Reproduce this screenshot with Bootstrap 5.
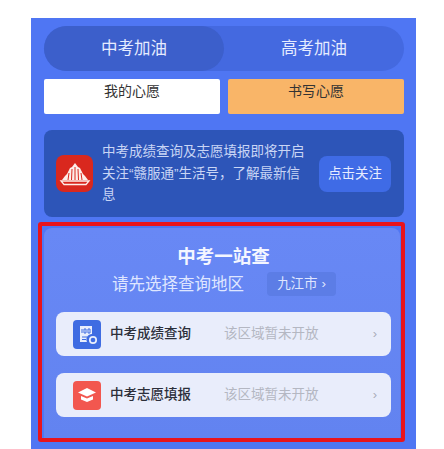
<!DOCTYPE html>
<html lang="zh-CN">
<head>
  <meta charset="UTF-8" />
  <meta name="viewport" content="width=device-width, initial-scale=1.0"/>
  <title>中考加油</title>
  <link href="https://cdn.jsdelivr.net/npm/bootstrap@5.3.0/dist/css/bootstrap.min.css" rel="stylesheet" />
  <style>
    body {
      background-color: #fff;
      font-family: "Liberation Sans", "Noto Sans CJK SC", sans-serif;
      height: 449px;
      overflow: hidden;
      padding: 18px 28px 0 31px;
    }

    .shell {
      background-color: #4f76f3;
      height: 431px;
      padding: 8px 12px 0 13px;
    }

    /* Tabs */
    .tab-track {
      background-color: #4469e0;
      border-radius: 23px;
      height: 45px;
      color: #e6ecff;
      font-size: 16.5px;
    }

    .tab-item {
      flex: 1;
      border-radius: 23px;
    }

    .tab-item.on {
      background-color: #3c5fcb;
    }

    /* Wish buttons */
    .wish-row {
      margin-top: 8px;
      gap: 8px;
    }

    .wish-btn {
      flex: 1;
      height: 35px;
      border-radius: 2px;
      font-size: 14px;
      line-height: 24px;
      text-align: center;
      color: #333;
    }

    .wish-mine { background-color: #fff; }
    .wish-write { background-color: #f9b568; }

    /* Notice */
    .notice {
      background-color: #2d55b8;
      border-radius: 8px;
      height: 87px;
      margin-top: 16px;
      padding: 0 12px;
      color: #c9d5f5;
    }

    .notice-logo {
      width: 37px;
      height: 37px;
      flex-shrink: 0;
      border-radius: 8px;
      background-color: #d9281e;
    }

    .notice-text {
      width: 208px;
      margin-left: 9px;
      font-size: 13.5px;
      line-height: 21.5px;
    }

    .notice-btn {
      width: 72px;
      height: 36px;
      margin-left: 9px;
      flex-shrink: 0;
      border-radius: 8px;
      background-color: #3f6be6;
      color: #e6ecff;
      font-size: 13.5px;
      line-height: 36px;
      text-align: center;
    }

    /* Query panel */
    .query-frame {
      border: 4px solid #e8141c;
      border-radius: 3px;
      height: 220px;
      margin: 5px -1px 0 -6px;
      padding: 2px 1px 0 2px;
    }

    .query-panel {
      background-image: linear-gradient(#6888f5, #6283f0);
      border-radius: 8px 8px 0 0;
      height: 210px;
      padding: 16px 9px 0 12px;
    }

    .query-title {
      color: #f4f6ff;
      font-size: 18.5px;
      font-weight: 700;
      line-height: 26px;
      text-align: center;
    }

    .query-sub {
      color: #dfe6ff;
      font-size: 16.5px;
      margin-top: 2px;
      height: 24px;
      padding-left: 56px;
    }

    .city-chip {
      width: 69px;
      height: 24px;
      margin-left: 23px;
      border-radius: 4px;
      background-color: #5c7de6;
      color: #dfe6ff;
      font-size: 13.5px;
      line-height: 24px;
      text-align: center;
    }

    .query-row {
      height: 44px;
      margin-bottom: 17px;
      padding: 0 14px 0 17px;
      border-radius: 8px;
      background-color: #e9edfb;
      font-size: 13.5px;
    }

    .row-first { margin-top: 16px; }

    .row-icon {
      width: 28px;
      height: 29px;
      flex-shrink: 0;
      border-radius: 4px;
    }

    .icon-blue { background-color: #3f6ce2; }
    .icon-red { background-color: #f2574f; }

    .row-name {
      width: 114px;
      margin-left: 9px;
      color: #2c2f3a;
      font-weight: 500;
    }

    .row-state {
      flex: 1;
      color: #b4b7c2;
    }

    .row-arrow {
      color: #a9adba;
      font-size: 13px;
    }
  </style>
</head>
<body>

<div class="shell">
  <div class="tab-track d-flex">
    <div class="tab-item on d-flex align-items-center justify-content-center">中考加油</div>
    <div class="tab-item d-flex align-items-center justify-content-center">高考加油</div>
  </div>

  <div class="wish-row d-flex">
    <div class="wish-btn wish-mine">我的心愿</div>
    <div class="wish-btn wish-write">书写心愿</div>
  </div>

  <div class="notice d-flex align-items-center">
    <div class="notice-logo d-flex align-items-center justify-content-center">
      <svg width="32" height="28" viewBox="0 0 32 28">
        <path d="M16 3 L19 7 L21 8 L24 14 L26 16 L29 20 L3 20 L6 16 L8 14 L11 8 L13 7 Z" fill="#fdeee9"/>
        <path d="M10 13 L9 20 M13 9 L12.500 20 M16 7 V20 M19 9 L19.500 20 M22 13 L23 20" stroke="#d9281e" stroke-width="1"/>
        <path d="M2 21 H30 L27 24.500 H5 Z" fill="none" stroke="#fdeee9" stroke-width="1.300"/>
      </svg>
    </div>
    <div class="notice-text">中考成绩查询及志愿填报即将开启关注“赣服通”生活号，了解最新信息</div>
    <div class="notice-btn">点击关注</div>
  </div>

  <div class="query-frame">
    <div class="query-panel">
      <div class="query-title">中考一站查</div>
      <div class="query-sub d-flex align-items-center">
        <span>请先选择查询地区</span>
        <span class="city-chip">九江市 ›</span>
      </div>

      <div class="query-row row-first d-flex align-items-center">
        <div class="row-icon icon-blue d-flex align-items-center justify-content-center">
          <svg width="24" height="24" viewBox="0 0 24 24">
            <path d="M5 4 H17 V12 A5.500 5.500 0 0 0 12 20 H5 Z" fill="#e9eefc"/>
            <path d="M7 15 H12 M7 17.500 H11" stroke="#3f6ce2" stroke-width="1.200"/>
            <path d="M7 7 V11 M9 7 H11 V11 H9 Z M13 7 H15 V11 H13 Z" fill="none" stroke="#3f6ce2" stroke-width="1"/>
            <circle cx="18" cy="18" r="3.200" fill="none" stroke="#e9eefc" stroke-width="1.700"/>
          </svg>
        </div>
        <div class="row-name">中考成绩查询</div>
        <div class="row-state">该区域暂未开放</div>
        <div class="row-arrow">›</div>
      </div>

      <div class="query-row d-flex align-items-center">
        <div class="row-icon icon-red d-flex align-items-center justify-content-center">
          <svg width="22" height="22" viewBox="0 0 22 22">
            <path d="M11 4 L20 8.500 L11 12.500 L2 8.500 Z" fill="#fff"/>
            <path d="M5 12 L11 14.500 L17 12 V15.500 L11 18 L5 15.500 Z" fill="#fff"/>
          </svg>
        </div>
        <div class="row-name">中考志愿填报</div>
        <div class="row-state">该区域暂未开放</div>
        <div class="row-arrow">›</div>
      </div>
    </div>
  </div>
</div>

<script src="https://cdn.jsdelivr.net/npm/bootstrap@5.3.0/dist/js/bootstrap.bundle.min.js"></script>
</body>
</html>
